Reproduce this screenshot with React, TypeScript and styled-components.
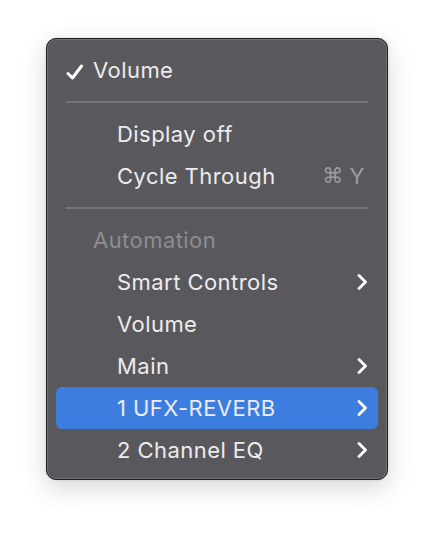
import React from "react";
import styled, { createGlobalStyle } from "styled-components";

const GlobalStyle = createGlobalStyle`
  html, body {
    margin: 0;
    padding: 0;
    background: #ffffff;
  }
  body {
    font-family: Inter, "Noto Sans", "Liberation Sans", sans-serif;
    -webkit-font-smoothing: antialiased;
  }
`;

const Page = styled.div`
  padding: 38px 0 0 46px;
  width: 434px;
  height: 534px;
  box-sizing: border-box;
`;

const Menu = styled.div`
  width: 342px;
  box-sizing: border-box;
  padding: 10px 9px 8px;
  background: #59585d;
  border: 1px solid #1f1f21;
  border-radius: 10px;
  box-shadow: inset 0 0 0 1px #727176, 0 8px 26px rgba(0, 0, 0, 0.16),
    0 0 3px rgba(0, 0, 0, 0.12);
  display: flex;
  flex-direction: column;
`;

const Row = styled.div<{ $active?: boolean; $muted?: boolean; $indent?: boolean }>`
  height: 42px;
  display: flex;
  align-items: center;
  padding: 0 10px 0 ${(p) => (p.$indent ? "61px" : "37px")};
  border-radius: 6px;
  background: ${(p) => (p.$active ? "#3c7ddf" : "transparent")};
  color: ${(p) => (p.$muted ? "#8e8d92" : "#ececed")};
  font-size: 22px;
  font-weight: 400;
  letter-spacing: 0.45px;
  position: relative;
`;

const Label = styled.span`
  flex: 1;
`;

const Check = styled.svg`
  position: absolute;
  left: 10px;
  top: 15px;
`;

const Shortcut = styled.span`
  color: #9d9ca1;
  display: flex;
  align-items: center;
  gap: 6px;
  margin-right: 3px;
`;

const Cmd = styled.span`
  font-family: "DejaVu Sans", sans-serif;
  font-size: 21px;
`;

const Separator = styled.div`
  height: 2px;
  background: #737277;
  margin: 10px 10px;
`;

const CheckMark = () => (
  <Check width="18" height="16" viewBox="0 0 18 16">
    <path
      d="M2 9.5 L6.5 14 L15.5 2"
      fill="none"
      stroke="#ffffff"
      strokeWidth="3"
      strokeLinecap="round"
      strokeLinejoin="round"
    />
  </Check>
);

const Chevron = () => (
  <svg width="12" height="16" viewBox="0 0 12 16">
    <path
      d="M3 1.5 L9.5 8 L3 14.5"
      fill="none"
      stroke="#ffffff"
      strokeWidth="2.8"
      strokeLinecap="round"
      strokeLinejoin="round"
    />
  </svg>
);

type Item = { label: string; sub?: boolean; active?: boolean };

const automation: Item[] = [
  { label: "Smart Controls", sub: true },
  { label: "Volume" },
  { label: "Main", sub: true },
  { label: "1 UFX-REVERB", sub: true, active: true },
  { label: "2 Channel EQ", sub: true },
];

export default function App() {
  return (
    <Page>
      <GlobalStyle />
      <Menu>
        <Row>
          <CheckMark />
          <Label>Volume</Label>
        </Row>
        <Separator />
        <Row $indent>
          <Label>Display off</Label>
        </Row>
        <Row $indent>
          <Label>Cycle Through</Label>
          <Shortcut>
            <Cmd>⌘</Cmd>Y
          </Shortcut>
        </Row>
        <Separator />
        <Row $muted>
          <Label>Automation</Label>
        </Row>
        {automation.map((it, i) => (
          <Row key={i} $indent $active={it.active}>
            <Label>{it.label}</Label>
            {it.sub && <Chevron />}
          </Row>
        ))}
      </Menu>
    </Page>
  );
}
